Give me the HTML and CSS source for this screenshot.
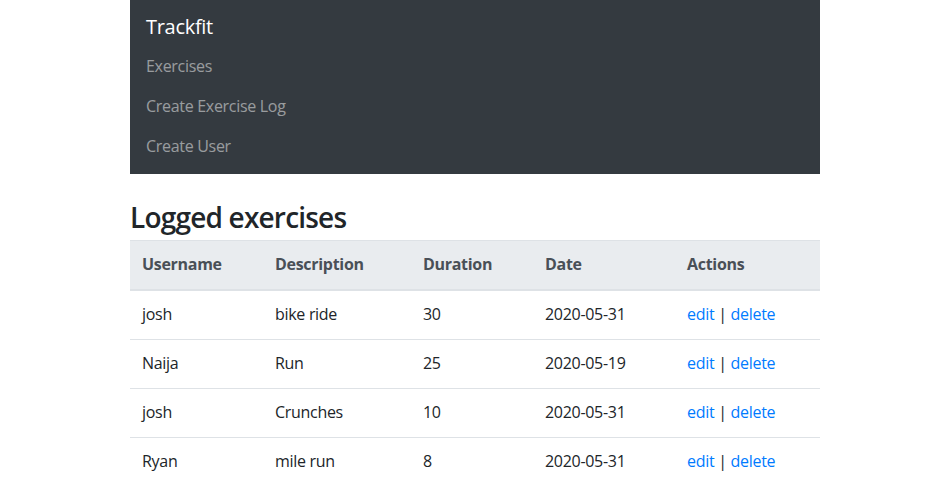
FILE: index.html
```html
<!DOCTYPE html>
<html lang="en">
<head>
<meta charset="utf-8">
<title>Trackfit</title>
<link rel="stylesheet" href="styles.css">
</head>
<body>
<div class="container">
  <nav class="navbar">
    <a class="brand" href="#">Trackfit</a>
    <ul class="nav">
      <li><a class="nav-link" href="#">Exercises</a></li>
      <li><a class="nav-link" href="#">Create Exercise Log</a></li>
      <li><a class="nav-link" href="#">Create User</a></li>
    </ul>
  </nav>
  <h3 class="title">Logged exercises</h3>
  <table class="table">
    <colgroup>
      <col class="c1"><col class="c2"><col class="c3"><col class="c4"><col class="c5">
    </colgroup>
    <thead>
      <tr><th>Username</th><th>Description</th><th>Duration</th><th>Date</th><th>Actions</th></tr>
    </thead>
    <tbody>
      <tr><td>josh</td><td>bike ride</td><td>30</td><td>2020-05-31</td><td><a href="#">edit</a> | <a href="#">delete</a></td></tr>
      <tr><td>Naija</td><td>Run</td><td>25</td><td>2020-05-19</td><td><a href="#">edit</a> | <a href="#">delete</a></td></tr>
      <tr><td>josh</td><td>Crunches</td><td>10</td><td>2020-05-31</td><td><a href="#">edit</a> | <a href="#">delete</a></td></tr>
      <tr><td>Ryan</td><td>mile run</td><td>8</td><td>2020-05-31</td><td><a href="#">edit</a> | <a href="#">delete</a></td></tr>
    </tbody>
  </table>
</div>
</body>
</html>
```
FILE: styles.css
```css
* { box-sizing: border-box; }
html, body { margin: 0; padding: 0; }
body {
  font-family: "Open Sans", "Noto Sans", sans-serif;
  font-size: 16px;
  line-height: 1.5;
  color: #212529;
  background: #fff;
  letter-spacing: -0.3px;
}
.container {
  width: 690px;
  margin: 0 0 0 130px;
}
.navbar {
  background: #343a40;
  padding: 8px 16px;
  display: flex;
  flex-direction: column;
}
.brand {
  color: #fff;
  text-decoration: none;
  font-size: 20px;
  line-height: 30px;
  padding: 4px 0 4px;
}
.nav {
  list-style: none;
  margin: 0;
  padding: 0;
}
.nav-link {
  display: block;
  color: rgba(255,255,255,.5);
  text-decoration: none;
  padding: 8px 0;
  line-height: 24px;
}
.title {
  font-size: 28px;
  font-weight: 600;
  line-height: 30px;
  margin: 28px 0 8px;
  letter-spacing: -0.8px;
}
.table {
  width: 100%;
  border-collapse: collapse;
  table-layout: fixed;
}
.c1 { width: 133px; }
.c2 { width: 148px; }
.c3 { width: 122px; }
.c4 { width: 142px; }
.c5 { width: 145px; }
.table th, .table td {
  padding: 11px 12px 13px;
  text-align: left;
  vertical-align: top;
  border-top: 1px solid #dee2e6;
  line-height: 24px;
}
.table thead th {
  background: #e9ecef;
  color: #495057;
  font-weight: 700;
  border-bottom: 2px solid #dee2e6;
}
.table a { color: #007bff; text-decoration: none; }
```
